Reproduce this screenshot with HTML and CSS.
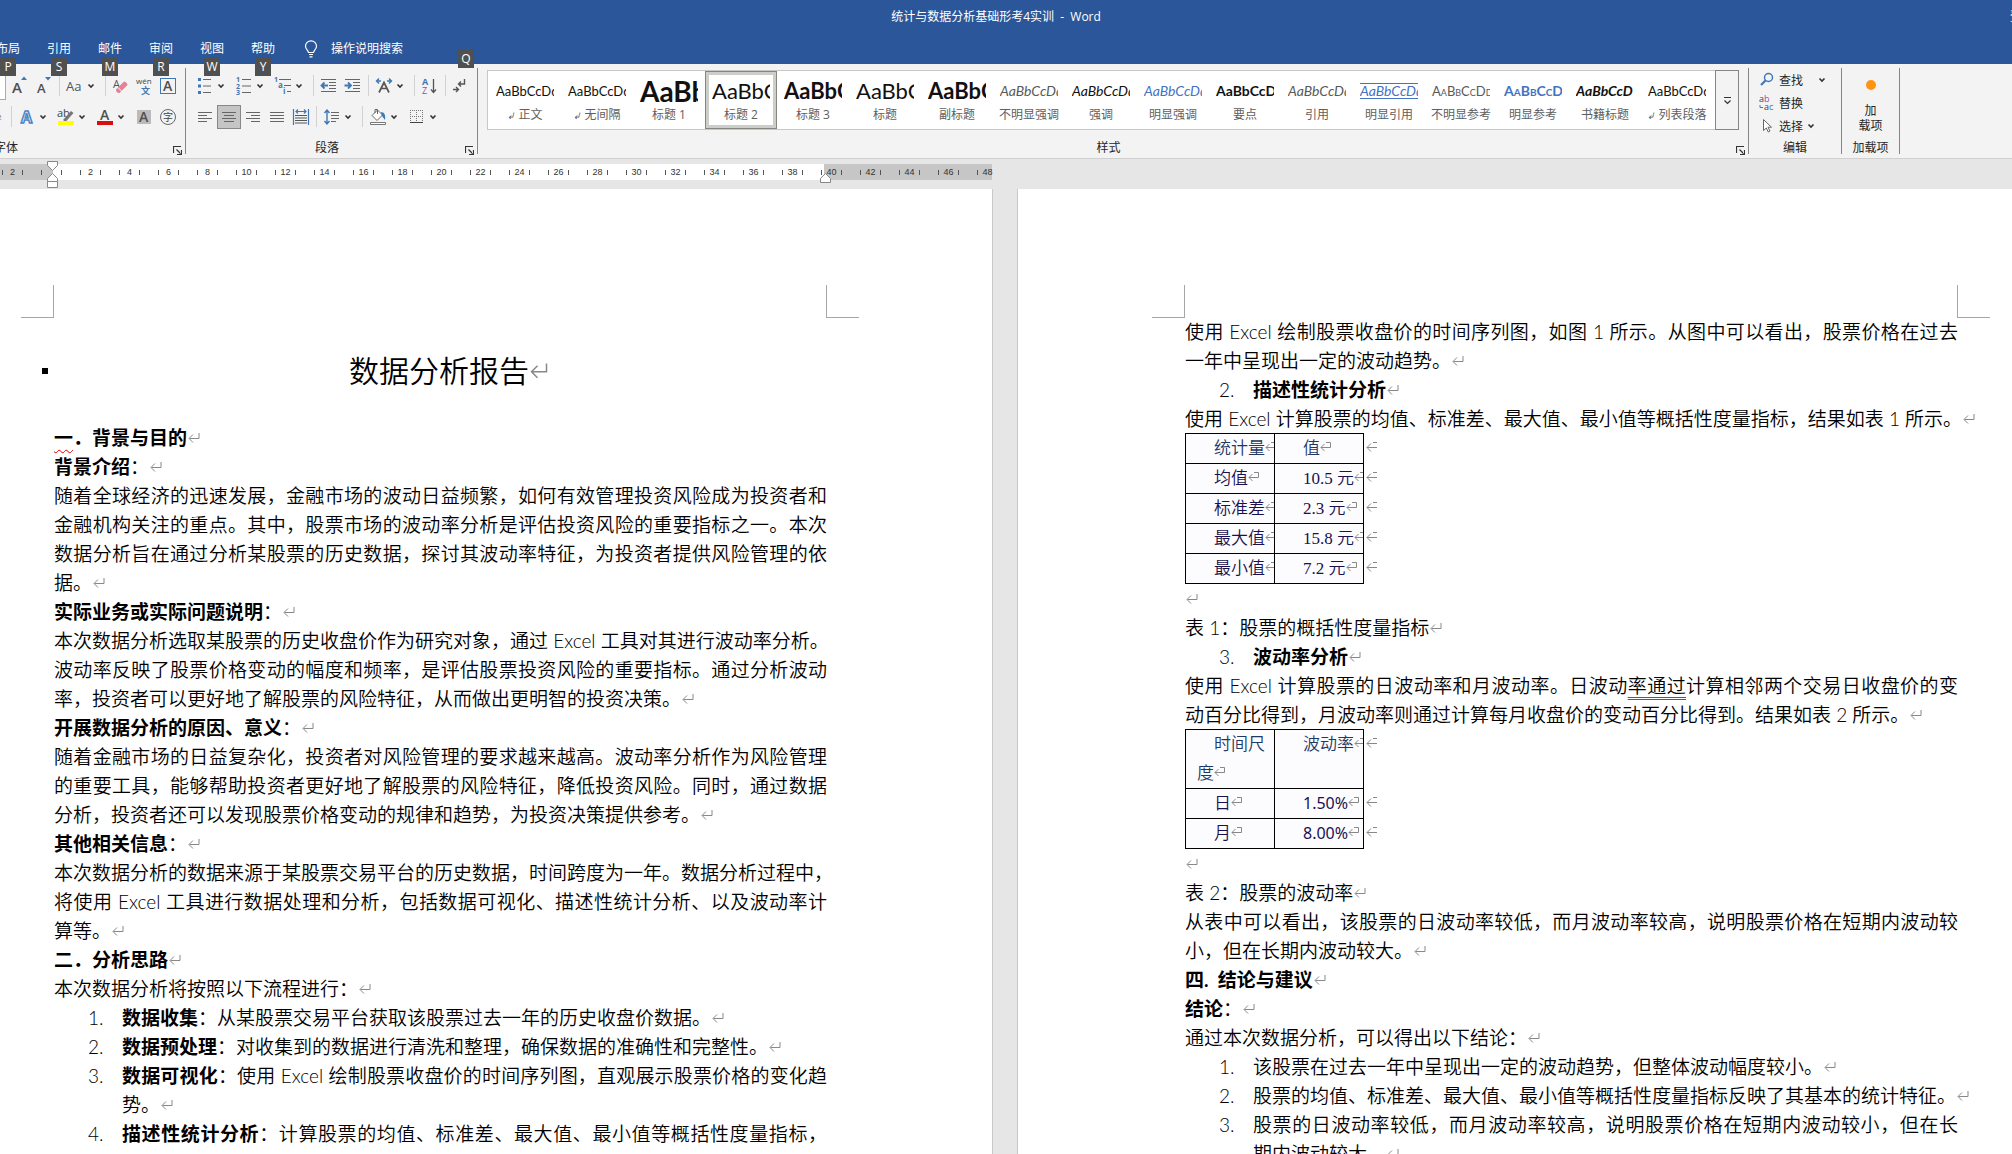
FILE: index.html
```html
<!DOCTYPE html>
<html lang="zh-CN">
<head>
    <meta charset="UTF-8">
    <meta name="viewport" content="width=device-width, initial-scale=1.0">
    <title>统计与数据分析基础形考4实训 - Word</title>
    <link rel="stylesheet" href="styles.css">
</head>
<body>
    <!-- Shared symbols -->
    <svg class="symbols" aria-hidden="true">
        <symbol id="chev" viewBox="0 0 8 8"><path d="M1.500 2.500 4 5l2.500-2.500" fill="none" stroke="#333" stroke-width="1.600"/></symbol>
        <symbol id="ret" viewBox="0 0 12 12"><path d="M11 1v5.500H1.500M5 2.500l-4 4 4 4" fill="none" stroke="#888" stroke-width="1"/></symbol>
        <symbol id="cell" viewBox="0 0 12 12"><path d="M6 1.500h4.500v5H1M4.500 3 1 6.500 4.500 10" fill="none" stroke="#888" stroke-width="1"/></symbol>
        <symbol id="rowend" viewBox="0 0 12 12"><path d="M7 1.500h4M11 6.500H1M5 2.500l-4 4 4 4" fill="none" stroke="#888" stroke-width="1"/></symbol>
        <symbol id="launch" viewBox="0 0 9 9"><path d="M.5 7V.5H8M3.500 3.500l4 4M8.500 4v4.500H4" fill="none" stroke="#333" stroke-width="1.200"/></symbol>
    </svg>

    <!-- Title bar and tabs -->
    <header class="titlebar">
        <div class="title-row">
            <h1 class="doc-name">统计与数据分析基础形考4实训&nbsp; -&nbsp; Word</h1>
            <span class="account">登录</span>
        </div>
        <nav class="tabs">
            <a href="#" class="tab">布局<kbd>P</kbd></a>
            <a href="#" class="tab">引用<kbd>S</kbd></a>
            <a href="#" class="tab">邮件<kbd>M</kbd></a>
            <a href="#" class="tab">审阅<kbd>R</kbd></a>
            <a href="#" class="tab">视图<kbd>W</kbd></a>
            <a href="#" class="tab">帮助<kbd>Y</kbd></a>
            <a href="#" class="tell-me">
                <svg width="14" height="18" viewBox="0 0 14 18" fill="none" stroke="#fff" stroke-width="1.200"><path d="M4.500 12.500c0-2-3-3-3-6.200a5.500 5.500 0 0 1 11 0c0 3.200-3 4.200-3 6.200zM5 14.500h4M5.500 16.800h3"/></svg>
                操作说明搜索<kbd>Q</kbd>
            </a>
        </nav>
    </header>

    <!-- Ribbon -->
    <section class="ribbon">
        <div class="group font-group">
            <div class="row">
                <span class="combo-end"></span>
                <button class="tool" aria-label="增大字号"><svg viewBox="0 0 24 24"><text x="4" y="19" font-size="15" class="ga">A</text><path d="M13 6l3-3.500L19 6z" fill="#3f78b5"/></svg></button>
                <button class="tool" aria-label="减小字号"><svg viewBox="0 0 24 24"><text x="5" y="19" font-size="13" class="ga">A</text><path d="M13 3l3 3.500L19 3z" fill="#3f78b5"/></svg></button>
                <span class="sep"></span>
                <button class="tool drop" aria-label="更改大小写"><svg viewBox="0 0 24 24"><text x="3" y="17" font-size="13" fill="#555">Aa</text></svg><svg class="chev"><use href="#chev"/></svg></button>
                <span class="sep"></span>
                <button class="tool" aria-label="清除格式"><svg viewBox="0 0 24 24"><text x="4" y="14" font-size="11" fill="#555">A</text><path d="M7 15.500 14.500 8q1-.8 2 0l1.500 1.500q1 1 0 2L10.500 19H9l-2-2z" fill="#e58293"/><path d="M9 13.500l3.800 3.800" stroke="#fff"/></svg></button>
                <button class="tool" aria-label="拼音指南"><svg viewBox="0 0 24 24"><text x="3" y="10" font-size="8" fill="#444">wén</text><text x="8" y="20" font-size="9" font-weight="700" fill="#3f78b5">文</text></svg></button>
                <button class="tool" aria-label="字符边框"><svg viewBox="0 0 24 24"><rect x="3.500" y="4.500" width="15" height="15" fill="none" stroke="#3f78b5"/><text x="6" y="17" font-size="14" class="ga">A</text></svg></button>
            </div>
            <div class="row">
                <span class="sup">2</span>
                <span class="sep"></span>
                <button class="tool drop" aria-label="文本效果"><svg viewBox="0 0 24 24"><text x="6" y="18" font-size="16" font-weight="700" fill="#fff" stroke="#4a86c5" stroke-width="1.500">A</text></svg><svg class="chev"><use href="#chev"/></svg></button>
                <button class="tool drop" aria-label="突出显示"><svg viewBox="0 0 24 24"><text x="3" y="12" font-size="11" fill="#444">ab</text><path d="M9 15l8-9 2.500 2-8 9z" fill="#777"/><path d="M4 16h16v4H4z" fill="#ff0"/></svg><svg class="chev"><use href="#chev"/></svg></button>
                <button class="tool drop" aria-label="字体颜色"><svg viewBox="0 0 24 24"><text x="7" y="15" font-size="14" class="ga">A</text><path d="M4 16h16v4H4z" fill="#d90d0d"/></svg><svg class="chev"><use href="#chev"/></svg></button>
                <button class="tool" aria-label="字符底纹"><svg viewBox="0 0 24 24"><path d="M5 5h14v14H5z" fill="#bbb"/><text x="7" y="17" font-size="14" class="ga">A</text></svg></button>
                <button class="tool" aria-label="带圈字符"><svg viewBox="0 0 24 24"><circle cx="12" cy="12" r="7.500" fill="none" stroke="#666"/><text x="7" y="16" font-size="10" fill="#444">字</text></svg></button>
            </div>
            <div class="group-foot"><span class="group-name">字体</span><button class="launcher" aria-label="字体设置"><svg><use href="#launch"/></svg></button></div>
        </div>

        <div class="group para-group">
            <div class="row">
                <button class="tool drop" aria-label="项目符号"><svg viewBox="0 0 24 24"><path d="M5 4h3v3H5zM5 10.500h3v3H5zM5 17h3v3H5z" fill="#3f78b5"/><path d="M10 5.500h8M10 12h8M10 18.500h8" stroke="#666"/></svg><svg class="chev"><use href="#chev"/></svg></button>
                <button class="tool drop" aria-label="编号"><svg viewBox="0 0 24 24"><text x="4" y="8" font-size="7" class="nb">1</text><text x="4" y="15" font-size="7" class="nb">2</text><text x="4" y="21" font-size="7" class="nb">3</text><path d="M10 5.500h9M10 12h9M10 18.500h9" stroke="#666"/></svg><svg class="chev"><use href="#chev"/></svg></button>
                <button class="tool drop" aria-label="多级列表"><svg viewBox="0 0 24 24"><text x="3" y="8" font-size="7" class="nb">1</text><text x="7" y="14" font-size="8" class="nb">a</text><text x="12" y="20" font-size="8" class="nb">i</text><path d="M8 5.500h12M13 11.500h7M16 17.500h4" stroke="#666"/></svg><svg class="chev"><use href="#chev"/></svg></button>
                <span class="sep"></span>
                <button class="tool" aria-label="减少缩进"><svg viewBox="0 0 24 24"><path d="M4 5.500h15M12 8.500h7M12 11.500h7M12 14.500h7M4 17.500h15" stroke="#666"/><path d="M11 11.500H4.500M7.500 8.500l-3 3 3 3" fill="none" stroke="#3f78b5" stroke-width="1.800"/></svg></button>
                <button class="tool" aria-label="增加缩进"><svg viewBox="0 0 24 24"><path d="M4 5.500h15M12 8.500h7M12 11.500h7M12 14.500h7M4 17.500h15" stroke="#666"/><path d="M3.500 11.500H10M7 8.500l3 3-3 3" fill="none" stroke="#3f78b5" stroke-width="1.800"/></svg></button>
                <span class="sep"></span>
                <button class="tool drop" aria-label="中文版式"><svg viewBox="0 0 24 24"><path d="M7 18.500l5-10 5 10M9 14.500h6" fill="none" stroke="#555" stroke-width="1.700"/><path d="M9 7H5m2-2.500L4.500 7 7 9.500M15 7h4m-2-2.500L19.500 7 17 9.500" fill="none" stroke="#3f78b5" stroke-width="1.400"/></svg><svg class="chev"><use href="#chev"/></svg></button>
                <span class="sep"></span>
                <button class="tool" aria-label="排序"><svg viewBox="0 0 24 24"><text x="4" y="11" font-size="9" class="nb">A</text><text x="4" y="20" font-size="9" fill="#8a4fb0">Z</text><path d="M15.500 5v13M13 15.500l2.500 3 2.500-3" fill="none" stroke="#555" stroke-width="1.300"/></svg></button>
                <span class="sep"></span>
                <button class="tool" aria-label="显示编辑标记"><svg viewBox="0 0 24 24"><path d="M15.500 5v5H10M12 7.500 9.500 10l2.500 2.500M4 15.500h5M7 13l2.500 2.500L7 18" fill="none" stroke="#555" stroke-width="1.400"/></svg></button>
            </div>
            <div class="row">
                <button class="tool" aria-label="左对齐"><svg viewBox="0 0 24 24"><path d="M5 7.500h14M5 10.500h9M5 13.500h14M5 16.500h9" stroke="#666"/></svg></button>
                <button class="tool active" aria-label="居中"><svg viewBox="0 0 24 24"><path d="M5 7.500h14M7 10.500h10M5 13.500h14M7 16.500h10" stroke="#666"/></svg></button>
                <button class="tool" aria-label="右对齐"><svg viewBox="0 0 24 24"><path d="M5 7.500h14M10 10.500h9M5 13.500h14M10 16.500h9" stroke="#666"/></svg></button>
                <button class="tool" aria-label="两端对齐"><svg viewBox="0 0 24 24"><path d="M5 7.500h14M5 10.500h14M5 13.500h14M5 16.500h14" stroke="#666"/></svg></button>
                <button class="tool" aria-label="分散对齐"><svg viewBox="0 0 24 24"><path d="M4.500 4v16M19.500 4v16M7 6.500h10M9 4.500l-2 2 2 2M15 4.500l2 2-2 2" fill="none" stroke="#3f78b5" stroke-width="1.200"/><path d="M6 10.500h12M6 13h12M6 15.500h12M6 18h12" stroke="#555"/></svg></button>
                <span class="sep"></span>
                <button class="tool drop" aria-label="行距"><svg viewBox="0 0 24 24"><path d="M7 5v14M4.500 8 7 5l2.500 3M4.500 16 7 19l2.500-3" fill="none" stroke="#3f78b5" stroke-width="1.400"/><path d="M11 7.500h8M11 10.500h8M11 13.500h8M11 16.500h5" stroke="#666"/></svg><svg class="chev"><use href="#chev"/></svg></button>
                <span class="sep"></span>
                <button class="tool drop" aria-label="底纹"><svg viewBox="0 0 24 24"><path d="M6 10.500 11.500 5l5 5-5.500 5.500zM9 8V4.500h2.500V9" fill="#fff" stroke="#666"/><path d="M15 7c4 0 4.500 4 4 8l-3-4z" fill="#3f78b5"/><path d="M4.500 17.500h15v2h-15z" fill="#fff" stroke="#777"/></svg><svg class="chev"><use href="#chev"/></svg></button>
                <button class="tool drop" aria-label="边框"><svg viewBox="0 0 24 24"><path d="M5 5.500h13M5 11.500h13M5.500 5v12M11.500 5v12M17.500 5v12" stroke="#777" stroke-dasharray="1 1"/><path d="M5 17.500h13" stroke="#444"/></svg><svg class="chev"><use href="#chev"/></svg></button>
            </div>
            <div class="group-foot"><span class="group-name">段落</span><button class="launcher" aria-label="段落设置"><svg><use href="#launch"/></svg></button></div>
        </div>

        <div class="group style-group">
            <div class="gallery">
                <button class="style"><span class="demo">AaBbCcDd</span><span class="style-name"><i>↲</i> 正文</span></button>
                <button class="style"><span class="demo">AaBbCcDd</span><span class="style-name"><i>↲</i> 无间隔</span></button>
                <button class="style"><span class="demo huge">AaBb</span><span class="style-name">标题 1</span></button>
                <button class="style selected"><span class="demo big">AaBbC</span><span class="style-name">标题 2</span></button>
                <button class="style"><span class="demo big strong">AaBbC</span><span class="style-name">标题 3</span></button>
                <button class="style"><span class="demo big">AaBbC</span><span class="style-name">标题</span></button>
                <button class="style"><span class="demo big strong">AaBbC</span><span class="style-name">副标题</span></button>
                <button class="style"><span class="demo slant soft">AaBbCcDd</span><span class="style-name">不明显强调</span></button>
                <button class="style"><span class="demo slant">AaBbCcDd</span><span class="style-name">强调</span></button>
                <button class="style"><span class="demo slant blue">AaBbCcDd</span><span class="style-name">明显强调</span></button>
                <button class="style"><span class="demo strong">AaBbCcD</span><span class="style-name">要点</span></button>
                <button class="style"><span class="demo slant soft">AaBbCcDd</span><span class="style-name">引用</span></button>
                <button class="style"><span class="demo slant blue ruled">AaBbCcDd</span><span class="style-name">明显引用</span></button>
                <button class="style"><span class="demo caps soft">AaBbCcDd</span><span class="style-name">不明显参考</span></button>
                <button class="style"><span class="demo caps blue strong">AaBbCcDd</span><span class="style-name">明显参考</span></button>
                <button class="style"><span class="demo slant strong">AaBbCcD</span><span class="style-name">书籍标题</span></button>
                <button class="style"><span class="demo">AaBbCcDd</span><span class="style-name"><i>↲</i> 列表段落</span></button>
                <button class="more" aria-label="其他样式"><svg width="9" height="9" viewBox="0 0 9 9"><path d="M1 1.500h7M1.500 4.500l3 3 3-3" fill="none" stroke="#333" stroke-width="1.200"/></svg></button>
            </div>
            <div class="group-foot"><span class="group-name">样式</span><button class="launcher" aria-label="样式窗格"><svg><use href="#launch"/></svg></button></div>
        </div>

        <div class="group edit-group">
            <button class="edit"><svg width="16" height="16" viewBox="0 0 16 16"><circle cx="9.500" cy="5.500" r="4" fill="none" stroke="#3f78b5" stroke-width="1.500"/><path d="M6.500 8.500 2 13" stroke="#3f78b5" stroke-width="2.200"/></svg><span class="find">查找</span><svg class="chev"><use href="#chev"/></svg></button>
            <button class="edit"><svg width="16" height="16" viewBox="0 0 16 16"><text x="0" y="7" font-size="9" fill="#444">a<tspan fill="#8a4fb0">b</tspan></text><text x="5" y="15" font-size="9" fill="#444">a<tspan fill="#3f78b5">c</tspan></text><path d="M1 10v2.500h3" fill="none" stroke="#3f78b5"/></svg><span>替换</span></button>
            <button class="edit"><svg width="16" height="16" viewBox="0 0 16 16"><path d="M4.500 1.500v11l2.800-2.500 2 4 1.700-1-2-3.800h3.500z" fill="#fff" stroke="#666"/></svg><span>选择</span><svg class="chev"><use href="#chev"/></svg></button>
            <div class="group-foot"><span class="group-name">编辑</span></div>
        </div>

        <div class="group addin-group">
            <button class="addin"><span class="dot"></span>加<br>载项</button>
            <div class="group-foot"><span class="group-name">加载项</span></div>
        </div>
    </section>

    <!-- Ruler -->
    <div class="ruler-strip">
        <div class="ruler">
            <span>2</span><span class="zero"></span><span>2</span><span>4</span><span>6</span><span>8</span><span>10</span><span>12</span><span>14</span><span>16</span><span>18</span><span>20</span><span>22</span><span>24</span><span>26</span><span>28</span><span>30</span><span>32</span><span>34</span><span>36</span><span>38</span><span>40</span><span>42</span><span>44</span><span>46</span><span class="last">48</span>
        </div>
        <svg class="indent-left" width="12" height="28" viewBox="0 0 12 28" fill="#fff" stroke="#888"><path d="M.5.5h10v4l-5 5-5-5zM.5 20.500v-3l5-5 5 5v3zM.5 20.500h10v6H.5z"/></svg>
        <svg class="indent-right" width="12" height="11" viewBox="0 0 12 11" fill="#fff" stroke="#888"><path d="M.5 9.500v-4l5-5 5 5v4z"/></svg>
    </div>

    <!-- Document -->
    <main class="pages">
        <article class="page">
            <span class="corner tl"></span><span class="corner tr"></span>
            <h2 class="report-title">数据分析报告<svg class="ret"><use href="#ret"/></svg></h2>
            <h3><span class="typo">一</span>．背景与目的<svg class="ret"><use href="#ret"/></svg></h3>
            <p><b>背景介绍</b>：<svg class="ret"><use href="#ret"/></svg></p>
            <p>
                <span class="line">随着全球经济的迅速发展，金融市场的波动日益频繁，如何有效管理投资风险成为投资者和</span>
                <span class="line">金融机构关注的重点。其中，股票市场的波动率分析是评估投资风险的重要指标之一。本次</span>
                <span class="line">数据分析旨在通过分析某股票的历史数据，探讨其波动率特征，为投资者提供风险管理的依</span>
                据。<svg class="ret"><use href="#ret"/></svg>
            </p>
            <p><b>实际业务或实际问题说明</b>：<svg class="ret"><use href="#ret"/></svg></p>
            <p>
                <span class="line">本次数据分析选取某股票的历史收盘价作为研究对象，通过 Excel 工具对其进行波动率分析。</span>
                <span class="line">波动率反映了股票价格变动的幅度和频率，是评估股票投资风险的重要指标。通过分析波动</span>
                率，投资者可以更好地了解股票的风险特征，从而做出更明智的投资决策。<svg class="ret"><use href="#ret"/></svg>
            </p>
            <p><b>开展数据分析的原因、意义</b>：<svg class="ret"><use href="#ret"/></svg></p>
            <p>
                <span class="line">随着金融市场的日益复杂化，投资者对风险管理的要求越来越高。波动率分析作为风险管理</span>
                <span class="line">的重要工具，能够帮助投资者更好地了解股票的风险特征，降低投资风险。同时，通过数据</span>
                分析，投资者还可以发现股票价格变动的规律和趋势，为投资决策提供参考。<svg class="ret"><use href="#ret"/></svg>
            </p>
            <p><b>其他相关信息</b>：<svg class="ret"><use href="#ret"/></svg></p>
            <p>
                <span class="line">本次数据分析的数据来源于某股票交易平台的历史数据，时间跨度为一年。数据分析过程中，</span>
                <span class="line">将使用 Excel 工具进行数据处理和分析，包括数据可视化、描述性统计分析、以及波动率计</span>
                算等。<svg class="ret"><use href="#ret"/></svg>
            </p>
            <h3>二．分析思路<svg class="ret"><use href="#ret"/></svg></h3>
            <p>本次数据分析将按照以下流程进行：<svg class="ret"><use href="#ret"/></svg></p>
            <ol>
                <li><span class="num">1.</span><b>数据收集</b>：从某股票交易平台获取该股票过去一年的历史收盘价数据。<svg class="ret"><use href="#ret"/></svg></li>
                <li><span class="num">2.</span><b>数据预处理</b>：对收集到的数据进行清洗和整理，确保数据的准确性和完整性。<svg class="ret"><use href="#ret"/></svg></li>
                <li><span class="num">3.</span><span class="line"><b>数据可视化</b>：使用 Excel 绘制股票收盘价的时间序列图，直观展示股票价格的变化趋</span>势。<svg class="ret"><use href="#ret"/></svg></li>
                <li><span class="num">4.</span><span class="line"><b>描述性统计分析</b>：计算股票的均值、标准差、最大值、最小值等概括性度量指标，</span></li>
            </ol>
        </article>

        <article class="page">
            <span class="corner tl"></span><span class="corner tr"></span>
            <p>
                <span class="line">使用 Excel 绘制股票收盘价的时间序列图，如图 1 所示。从图中可以看出，股票价格在过去</span>
                一年中呈现出一定的波动趋势。<svg class="ret"><use href="#ret"/></svg>
            </p>
            <ol>
                <li><span class="num">2.</span><b>描述性统计分析</b><svg class="ret"><use href="#ret"/></svg></li>
            </ol>
            <p>使用 Excel 计算股票的均值、标准差、最大值、最小值等概括性度量指标，结果如表 1 所示。<svg class="ret"><use href="#ret"/></svg></p>
            <table>
                <tr><th>统计量<svg class="ret"><use href="#cell"/></svg></th><th>值<svg class="ret"><use href="#cell"/></svg></th><td class="row-end"><svg class="ret"><use href="#rowend"/></svg></td></tr>
                <tr><td>均值<svg class="ret"><use href="#cell"/></svg></td><td>10.5 元<svg class="ret"><use href="#cell"/></svg></td><td class="row-end"><svg class="ret"><use href="#rowend"/></svg></td></tr>
                <tr><td>标准差<svg class="ret"><use href="#cell"/></svg></td><td>2.3 元<svg class="ret"><use href="#cell"/></svg></td><td class="row-end"><svg class="ret"><use href="#rowend"/></svg></td></tr>
                <tr><td>最大值<svg class="ret"><use href="#cell"/></svg></td><td>15.8 元<svg class="ret"><use href="#cell"/></svg></td><td class="row-end"><svg class="ret"><use href="#rowend"/></svg></td></tr>
                <tr><td>最小值<svg class="ret"><use href="#cell"/></svg></td><td>7.2 元<svg class="ret"><use href="#cell"/></svg></td><td class="row-end"><svg class="ret"><use href="#rowend"/></svg></td></tr>
            </table>
            <p><svg class="ret"><use href="#ret"/></svg></p>
            <p>表 1：股票的概括性度量指标<svg class="ret"><use href="#ret"/></svg></p>
            <ol>
                <li><span class="num">3.</span><b>波动率分析</b><svg class="ret"><use href="#ret"/></svg></li>
            </ol>
            <p>
                <span class="line">使用 Excel 计算股票的日波动率和月波动率。日波动<span class="grammar">率通过</span>计算相邻两个交易日收盘价的变</span>
                动百分比得到，月波动率则通过计算每月收盘价的变动百分比得到。结果如表 2 所示。<svg class="ret"><use href="#ret"/></svg>
            </p>
            <table>
                <tr><th>时间尺<br>度<svg class="ret"><use href="#cell"/></svg></th><th>波动率<svg class="ret"><use href="#cell"/></svg></th><td class="row-end"><svg class="ret"><use href="#rowend"/></svg></td></tr>
                <tr><td>日<svg class="ret"><use href="#cell"/></svg></td><td class="pct">1.50%<svg class="ret"><use href="#cell"/></svg></td><td class="row-end"><svg class="ret"><use href="#rowend"/></svg></td></tr>
                <tr><td>月<svg class="ret"><use href="#cell"/></svg></td><td class="pct">8.00%<svg class="ret"><use href="#cell"/></svg></td><td class="row-end"><svg class="ret"><use href="#rowend"/></svg></td></tr>
            </table>
            <p><svg class="ret"><use href="#ret"/></svg></p>
            <p>表 2：股票的波动率<svg class="ret"><use href="#ret"/></svg></p>
            <p>
                <span class="line">从表中可以看出，该股票的日波动率较低，而月波动率较高，说明股票价格在短期内波动较</span>
                小，但在长期内波动较大。<svg class="ret"><use href="#ret"/></svg>
            </p>
            <h3>四.&nbsp; 结论与建议<svg class="ret"><use href="#ret"/></svg></h3>
            <p><b>结论</b>：<svg class="ret"><use href="#ret"/></svg></p>
            <p>通过本次数据分析，可以得出以下结论：<svg class="ret"><use href="#ret"/></svg></p>
            <ol>
                <li><span class="num">1.</span>该股票在过去一年中呈现出一定的波动趋势，但整体波动幅度较小。<svg class="ret"><use href="#ret"/></svg></li>
                <li><span class="num">2.</span>股票的均值、标准差、最大值、最小值等概括性度量指标反映了其基本的统计特征。<svg class="ret"><use href="#ret"/></svg></li>
                <li><span class="num">3.</span><span class="line">股票的日波动率较低，而月波动率较高，说明股票价格在短期内波动较小，但在长</span>期内波动较大。<svg class="ret"><use href="#ret"/></svg></li>
            </ol>
        </article>
    </main>
</body>
</html>
```
FILE: styles.css
```css
* {
    box-sizing: border-box;
}
html {
    overflow: hidden;
}
body {
    font-family: "Open Sans", "Noto Sans CJK SC", sans-serif;
    font-size: 12px;
    background: #e6e6e6;
    margin: 0;
    height: 100vh;
    display: flex;
    flex-direction: column;
    overflow: hidden;
}
button {
    font: inherit;
    color: inherit;
    background: none;
    border: none;
    padding: 0;
}
a {
    color: inherit;
    text-decoration: none;
}
svg {
    flex: none;
}
.symbols {
    position: absolute;
    width: 0;
    height: 0;
}

/* Title bar */
.titlebar {
    height: 64px;
    flex: none;
    background: #2b579a;
    color: #fff;
}
.title-row {
    display: flex;
    height: 34px;
    line-height: 34px;
}
.doc-name {
    flex: 1;
    margin: 0;
    padding-right: 18px;
    font-size: 12px;
    font-weight: 400;
    text-align: center;
}
.account {
    width: 2px;
    overflow: hidden;
    white-space: nowrap;
}
.tabs {
    display: flex;
    gap: 27px;
    margin-left: -4px;
    height: 30px;
    line-height: 30px;
}
.tab {
    position: relative;
    width: 24px;
    white-space: nowrap;
}
.tell-me {
    position: relative;
    display: flex;
    align-items: center;
    gap: 13px;
    height: 30px;
    width: 172px;
    padding-left: 2px;
}
kbd {
    position: absolute;
    top: 23px;
    left: 4px;
    width: 16px;
    height: 19px;
    line-height: 19px;
    background: #505050;
    font-family: "Open Sans", sans-serif;
    font-size: 12px;
    text-align: center;
}
.tell-me kbd {
    top: 15px;
    left: auto;
    right: 0;
}

/* Ribbon */
.ribbon {
    display: flex;
    flex: none;
    height: 95px;
    padding: 4px 0;
    background: #f3f3f3;
    border-bottom: 1px solid #d0d0d0;
}
.group {
    display: flex;
    flex-direction: column;
    flex: none;
    border-right: 1px solid #868686;
    color: #262626;
}
.row {
    display: flex;
    align-items: center;
    height: 31px;
    margin-top: 2px;
}
.row + .row {
    margin-top: 0;
}
.tool {
    display: flex;
    align-items: center;
    flex: none;
    width: 24px;
    height: 24px;
}
.tool svg {
    width: 24px;
    height: 24px;
}
.tool.drop {
    width: 39px;
}
.tool.active {
    background: #c5c5c5;
    outline: 1px solid #888;
    outline-offset: -1px;
}
.chev, .tool .chev {
    width: 8px;
    height: 8px;
}
.ga {
    fill: #505050;
    font-weight: 600;
}
.nb {
    fill: #3f78b5;
    font-weight: 700;
}
.sep {
    width: 1px;
    height: 21px;
    margin: 0 3px;
    background: #d2d2d2;
}
.group-foot {
    display: flex;
    align-items: center;
    height: 14px;
    margin-top: auto;
    padding: 0 3px;
}
.group-name {
    flex: 1;
    text-align: center;
}
.launcher {
    width: 9px;
    height: 9px;
    margin-top: 6px;
}
.launcher svg {
    display: block;
    width: 9px;
    height: 9px;
}
.font-group {
    width: 186px;
}
.combo-end {
    width: 6px;
    height: 28px;
    margin-right: 2px;
    background: #fff;
    border: 1px solid #ababab;
    border-left: none;
}
.sup {
    width: 9px;
    color: #3f78b5;
    font-size: 8px;
    margin-left: -3px;
    margin-right: 2px;
}
.font-group .group-foot {
    padding-left: 0;
}
.font-group .group-name {
    text-align: left;
    margin-left: -6px;
}
.para-group {
    width: 292px;
}
.para-group .row {
    padding-left: 7px;
}
.style-group {
    width: 1271px;
    padding-left: 9px;
}
.style-group .group-foot {
    margin-left: -9px;
}
.gallery {
    display: flex;
    height: 60px;
    margin-top: 2px;
    padding-left: 1px;
    background: #fff;
    border: 1px solid #c8c8c8;
    width: 1252px;
}
.style {
    flex: none;
    width: 72px;
    display: flex;
    flex-direction: column;
    align-items: center;
}
.style.selected {
    border: 1px solid #868680;
    box-shadow: inset 0 0 0 3px #cdcdc9;
}
.style.selected .demo {
    margin-top: 3px;
}
.demo {
    width: 58px;
    height: 32px;
    margin-top: 4px;
    line-height: 32px;
    overflow: hidden;
    white-space: nowrap;
    text-align: left;
    color: #111;
    font-family: Lato, sans-serif;
    font-size: 13px;
}
.demo.strong, .demo.slant {
    font-size: 14px;
}
.demo.big {
    font-size: 22px;
}
.demo.huge {
    font-size: 28px;
    font-weight: 700;
}
.strong {
    font-weight: 700;
}
.slant {
    font-style: italic;
}
.soft {
    color: #595959;
}
.blue {
    color: #4472c4;
}
.caps {
    font-variant: small-caps;
}
.demo.ruled {
    height: 16px;
    line-height: 14px;
    margin: 12px 0 8px;
    border-top: 1px solid #4472c4;
    border-bottom: 1px solid #4472c4;
}
.style-name {
    line-height: 16px;
    color: #606060;
    white-space: nowrap;
}
.style-name i {
    font-size: 9px;
}
.more {
    width: 24px;
    margin: -1px -1px -1px auto;
    background: #f3f3f3;
    border: 1px solid #868686;
}
.edit-group {
    width: 93px;
}
.edit {
    display: flex;
    align-items: center;
    gap: 4px;
    height: 23px;
    padding-left: 10px;
}
.find {
    margin-right: 11px;
}
.addin-group {
    width: 58px;
}
.addin {
    padding-top: 12px;
    line-height: 15px;
}
.dot {
    display: block;
    width: 10px;
    height: 10px;
    margin: 0 auto 13px;
    border-radius: 50%;
    background: #ff9411;
}

/* Ruler */
.ruler-strip {
    position: relative;
    flex: none;
    height: 30px;
    padding-top: 5px;
}
.ruler {
    display: flex;
    height: 16px;
    width: 992px;
    background: linear-gradient(to right, #c6c6c6 53px, #fff 53px, #fff 824px, #c6c6c6 824px);
}
.ruler span {
    flex: none;
    display: flex;
    align-items: center;
    justify-content: space-between;
    width: 39px;
    padding: 0 9px;
    font-family: "Liberation Sans", sans-serif;
    font-size: 9px;
    color: #333;
}
.ruler span:first-child {
    margin-left: -7px;
}
.ruler span::before, .ruler span::after {
    content: "";
    width: 1px;
    height: 5px;
    background: #555;
}
.ruler .last::after {
    visibility: hidden;
}
.indent-left {
    position: absolute;
    left: 47px;
    top: 2px;
}
.indent-right {
    position: absolute;
    left: 820px;
    top: 14px;
}

/* Document */
.pages {
    display: flex;
    flex: 1;
    gap: 26px;
    min-height: 0;
    margin-left: -113px;
    overflow: hidden;
}
.page {
    position: relative;
    flex: none;
    width: 1105px;
    padding: 128px 165px 0 167px;
    background: #fff;
    outline: 1px solid #c8c8c8;
    color: #000;
    font-family: Lato, "Noto Sans CJK SC", sans-serif;
    font-size: 19px;
    font-weight: 350;
    line-height: 29px;
    white-space: nowrap;
    overflow: hidden;
}
.corner {
    position: absolute;
    top: 96px;
    width: 33px;
    height: 33px;
    border-bottom: 1px solid #a6a6a6;
}
.corner.tl {
    left: 134px;
    border-right: 1px solid #a6a6a6;
}
.corner.tr {
    right: 133px;
    border-left: 1px solid #a6a6a6;
}
.page p, .page h3, .page ol {
    margin: 0;
    padding: 0;
    list-style: none;
}
.page h3 {
    font-size: 19px;
    font-weight: 700;
}
.page b {
    font-weight: 700;
}
.report-title {
    position: relative;
    margin: 0;
    font-size: 30px;
    font-weight: 350;
    line-height: 106px;
    text-align: center;
    text-indent: 16px;
}
.report-title::before {
    content: "";
    position: absolute;
    left: -12px;
    top: 51px;
    width: 6px;
    height: 6px;
    background: #000;
}
.line {
    display: block;
    text-align: justify;
    text-align-last: justify;
}
.page li {
    position: relative;
    padding-left: 68px;
}
.num {
    position: absolute;
    left: 34px;
}
.ret {
    width: 12px;
    height: 12px;
    margin-left: 1px;
    vertical-align: 1px;
}
.report-title .ret {
    width: 18px;
    height: 18px;
    vertical-align: 2px;
}
.typo {
    text-decoration: underline wavy #d00 1px;
    text-underline-offset: 4px;
}
.grammar {
    text-decoration: underline double #2b5fc0 1px;
    text-underline-offset: 4px;
}
table {
    border-collapse: collapse;
    table-layout: fixed;
    width: 196px;
    font-size: 17px;
}
th, td {
    width: 89px;
    height: 30px;
    padding: 0 0 0 11px;
    border: 1px solid #000;
    background: #fcfcfe;
    color: #1a1050;
    font-family: "Liberation Serif", "Noto Sans CJK SC", serif;
    font-weight: 350;
    line-height: 29px;
    text-align: left;
    text-indent: 17px;
    vertical-align: top;
    overflow: hidden;
}
th {
    color: #1f3864;
}
td.pct {
    font-family: "Noto Sans", sans-serif;
    font-size: 16px;
    font-weight: 400;
}
td.row-end {
    width: 18px;
    padding: 0 0 0 2px;
    border: none;
    background: none;
    text-indent: 0;
}
table .ret {
    margin-left: 0;
}
```
